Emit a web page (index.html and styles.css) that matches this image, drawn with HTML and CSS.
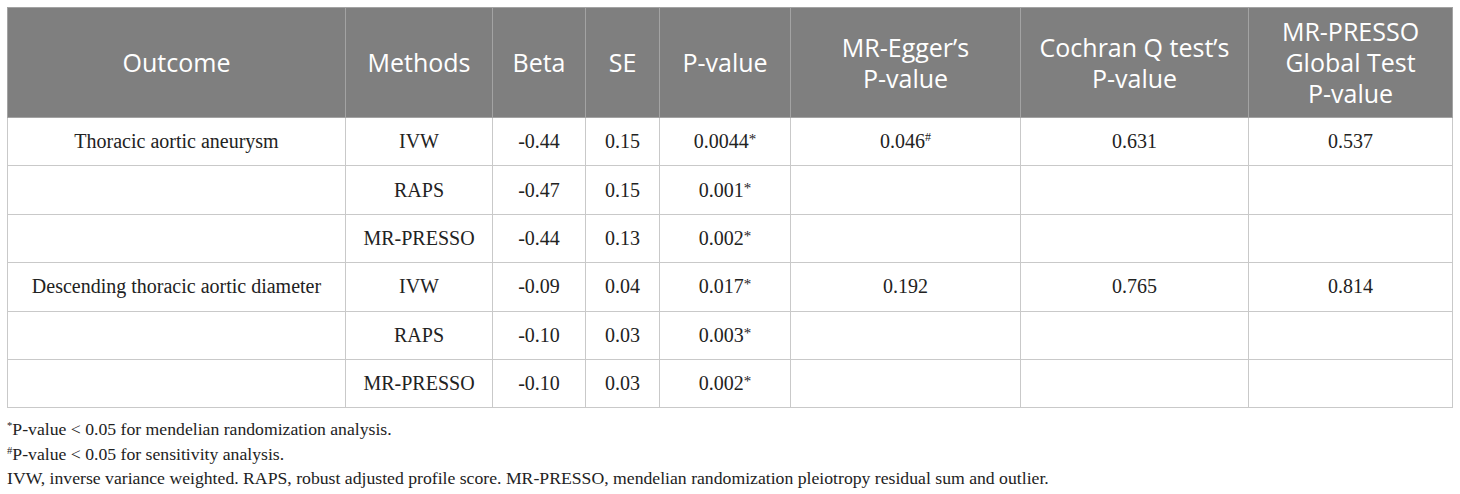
FILE: index.html
```html
<!DOCTYPE html>
<html lang="en">
<head>
  <meta charset="UTF-8" />
  <title>MR results</title>
  <link rel="stylesheet" href="styles.css">
</head>
<body>
  <table class="results">
    <colgroup>
      <col class="c-outcome"><col class="c-method"><col class="c-beta"><col class="c-se">
      <col class="c-p"><col class="c-egger"><col class="c-cochran"><col class="c-presso">
    </colgroup>
    <thead>
      <tr>
        <th>Outcome</th>
        <th>Methods</th>
        <th>Beta</th>
        <th>SE</th>
        <th>P-value</th>
        <th>MR-Egger’s<br>P-value</th>
        <th>Cochran Q test’s<br>P-value</th>
        <th>MR-PRESSO<br>Global Test<br>P-value</th>
      </tr>
    </thead>
    <tbody>
      <tr><td>Thoracic aortic aneurysm</td><td>IVW</td><td>-0.44</td><td>0.15</td><td>0.0044<sup class="ast">*</sup></td><td>0.046<sup>#</sup></td><td>0.631</td><td>0.537</td></tr>
      <tr><td></td><td>RAPS</td><td>-0.47</td><td>0.15</td><td>0.001<sup class="ast">*</sup></td><td></td><td></td><td></td></tr>
      <tr><td></td><td>MR-PRESSO</td><td>-0.44</td><td>0.13</td><td>0.002<sup class="ast">*</sup></td><td></td><td></td><td></td></tr>
      <tr><td>Descending thoracic aortic diameter</td><td>IVW</td><td>-0.09</td><td>0.04</td><td>0.017<sup class="ast">*</sup></td><td>0.192</td><td>0.765</td><td>0.814</td></tr>
      <tr><td></td><td>RAPS</td><td>-0.10</td><td>0.03</td><td>0.003<sup class="ast">*</sup></td><td></td><td></td><td></td></tr>
      <tr><td></td><td>MR-PRESSO</td><td>-0.10</td><td>0.03</td><td>0.002<sup class="ast">*</sup></td><td></td><td></td><td></td></tr>
    </tbody>
  </table>
  <div class="notes">
    <p><sup>*</sup>P-value &lt; 0.05 for mendelian randomization analysis.</p>
    <p><sup>#</sup>P-value &lt; 0.05 for sensitivity analysis.</p>
    <p>IVW, inverse variance weighted. RAPS, robust adjusted profile score. MR-PRESSO, mendelian randomization pleiotropy residual sum and outlier.</p>
  </div>
</body>
</html>
```

FILE: styles.css
```css
* { margin: 0; padding: 0; box-sizing: border-box; }
body {
  background: #fff;
  color: #222;
  font-family: "Liberation Serif", "Times New Roman", serif;
  padding: 7px;
}
.results {
  width: 1445px;
  table-layout: fixed;
  border-collapse: collapse;
}
.c-outcome { width: 338px; }
.c-method { width: 147px; }
.c-beta { width: 93px; }
.c-se { width: 74px; }
.c-p { width: 131px; }
.c-egger { width: 230px; }
.c-cochran { width: 228px; }
.c-presso { width: 204px; }
.results th {
  background: #7f7f7f;
  color: #fff;
  font-family: "Open Sans", "DejaVu Sans", sans-serif;
  font-weight: 400;
  font-size: 25px;
  line-height: 31px;
  height: 110px;
  border: 1px solid #a3a3a3;
  text-align: center;
  vertical-align: middle;
}
.results td {
  height: 48.4px;
  border: 1px solid #c9c9c9;
  font-size: 20px;
  text-align: center;
  vertical-align: middle;
}
sup { font-size: 0.6em; line-height: 0; vertical-align: 0.55em; }
sup.ast { font-size: 0.75em; vertical-align: 0.3em; }
.notes { margin-top: 9px; font-size: 17.7px; line-height: 24.5px; }
```
